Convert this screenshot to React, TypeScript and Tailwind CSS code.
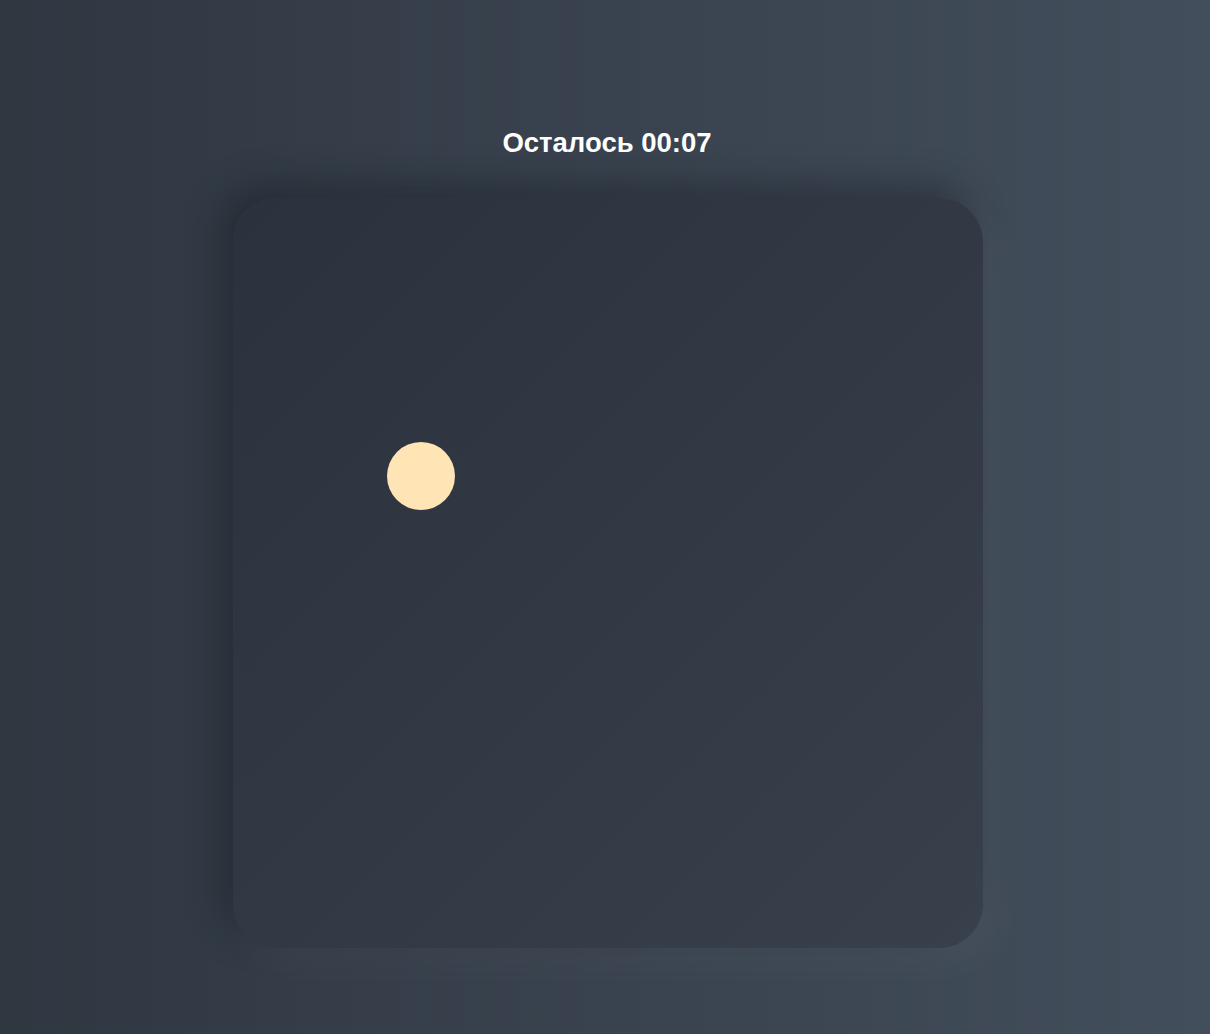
import React from 'react';

const App: React.FC = () => {
    return (
        <div className="min-h-screen w-full bg-gradient-to-r from-[#2f3741] to-[#434e5c] flex flex-col items-center pt-[127px]" style={{ fontFamily: '"Liberation Sans", Arial, sans-serif' }}>
            <h1 className="text-[27.5px] leading-8 font-bold text-white pl-[4px]">Осталось 00:07</h1>

            <div className="relative mt-[39px] ml-[5px] w-[750px] h-[750px] rounded-[44px] bg-gradient-to-br from-[#2c323d] to-[#38404b] shadow-[-12px_-12px_36px_rgba(20,24,30,0.45),12px_12px_36px_rgba(255,255,255,0.06)]">
                <div className="absolute left-[154px] top-[244px] w-[68px] h-[68px] rounded-full bg-[#ffe4b5]" />
            </div>
        </div>
    );
};

export default App;
